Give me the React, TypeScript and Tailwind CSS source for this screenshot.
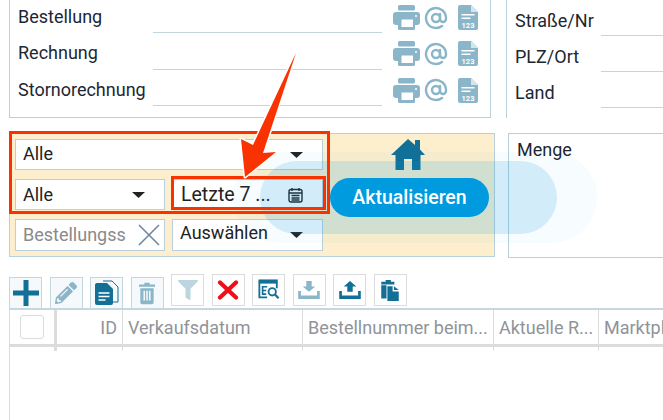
import { FaFilter, FaPencilAlt } from "react-icons/fa"
import { LuAtSign } from "react-icons/lu"

const docRows = ["Bestellung", "Rechnung", "Stornorechnung"]
const addressRows = ["Straße/Nr", "PLZ/Ort", "Land"]

const columns = [
  { label: "", width: "w-[47px]", border: "border-r-[3px]" },
  { label: "ID", width: "w-[66px]", border: "border-r", align: "text-right" },
  { label: "Verkaufsdatum", width: "w-[180px]", border: "border-r" },
  { label: "Bestellnummer beim...", width: "w-[191px]", border: "border-r" },
  { label: "Aktuelle R...", width: "w-[105px]", border: "border-r" },
  { label: "Marktplatz", width: "w-[65px]", border: "" },
]

function PrintIcon() {
  return (
    <svg width="27" height="25" viewBox="0 0 27 25" fill="#8bb6c9">
      <rect x="5" y="0" width="17" height="5.500" rx="1.500" />
      <rect x="0" y="7" width="27" height="13" rx="3" />
      <rect x="5" y="13" width="17" height="12" rx="1.500" />
      <rect x="8.500" y="14.500" width="11.500" height="7.500" fill="#fff" />
      <circle cx="23" cy="11" r="1" fill="#fff" />
    </svg>
  )
}

function DocIcon() {
  return (
    <svg width="20" height="25" viewBox="0 0 20 25">
      <path d="M2 0h11l7 7v16a2 2 0 0 1-2 2H2a2 2 0 0 1-2-2V2a2 2 0 0 1 2-2z" fill="#8bb6c9" />
      <path d="M13 0l7 7h-7z" fill="#d5e5ec" />
      <rect x="3.500" y="9" width="13" height="1.500" fill="#fff" />
      <rect x="3.500" y="12.500" width="9" height="1.500" fill="#fff" />
      <text x="10" y="22.500" textAnchor="middle" fontSize="7.500" fontWeight="700" fill="#fff" fontFamily="Roboto, sans-serif">
        123
      </text>
    </svg>
  )
}

function Caret() {
  return (
    <svg width="13" height="6" viewBox="0 0 13 6" fill="#222">
      <path d="M0 0h13L6.500 6z" />
    </svg>
  )
}

function SelectBox({ label, width, lift }: { label: string; width: string; lift: string }) {
  return (
    <div className={`${width} h-full flex items-center justify-between bg-white border border-[#b8d0dc] pl-[7px] pr-[19px] text-[#222]`}>
      <span className={lift}>{label}</span>
      <Caret />
    </div>
  )
}

function ToolButton({ children, low }: { children: React.ReactNode; low?: boolean }) {
  return (
    <div
      className={`w-[33px] h-[32px] flex items-center justify-center border ${low ? "mt-[3px] border-[#c3d7e0] bg-[#f5f9fb]" : "border-[#dcdcdc] bg-white"}`}
    >
      {children}
    </div>
  )
}

export default function App() {
  return (
    <div className="w-[663px] h-[420px] relative overflow-hidden bg-white text-[#1c2733] text-[18px] font-['Roboto',sans-serif]">
      {/* Top cards */}
      <div className="flex h-[118px] pl-[9px] gap-[15px]">
        <div className="w-[482px] border-x border-b border-[#bcd0da] pl-[8px] -mt-[3px] h-[121px]">
          {docRows.map((row) => (
            <div key={row} className="flex items-end h-[36.3px]">
              <span className="w-[135px] self-center pt-[3px]">{row}</span>
              <div className="w-[229px] border-b border-[#c3d5de]" />
              <div className="flex items-center ml-[11px] self-center pt-[5px] text-[#8bb6c9]">
                <PrintIcon />
                <LuAtSign className="w-[24px] h-[24px] ml-[4px]" strokeWidth={2.4} />
                <div className="ml-[10px]">
                  <DocIcon />
                </div>
              </div>
            </div>
          ))}
        </div>
        <div className="flex-1 border-l border-[#bcd0da] pl-[8px] -mt-[1px] h-[119px]">
          <div className="ml-[86px] border-b border-[#c3d5de] h-px" />
          {addressRows.map((row) => (
            <div key={row} className="flex h-[36px]">
              <span className="w-[86px] self-center pt-[4px]">{row}</span>
              <div className="flex-1 border-b border-[#c3d5de]" />
            </div>
          ))}
        </div>
      </div>

      {/* Filter panel and Menge */}
      <div className="flex mt-[15px] ml-[9px] gap-[13px]">
        <div className="w-[486px] h-[124px] flex bg-[#fdeecd] border border-[#b8d0dc] pl-[5px] pt-[5px]">
          <div className="w-[308px] flex flex-col gap-[9px]">
            <div className="h-[31px]">
              <SelectBox label="Alle" width="w-full" lift="pb-[3px]" />
            </div>
            <div className="h-[31px] flex gap-[7px]">
              <SelectBox label="Alle" width="w-[150px]" lift="pb-[1px]" />
              <div className="w-[151px] h-full flex items-center justify-between bg-white border border-[#b8d0dc] pl-2 pr-[19px] text-[19.500px] text-[#222]">
                <span>Letzte 7 ...</span>
                <svg width="15" height="16" viewBox="0 0 15 16" fill="none" stroke="#222" strokeWidth="1.400">
                  <rect x="1" y="2.500" width="13" height="12.500" rx="2" />
                  <path d="M1 6h13M4 1v3M11 1v3M3.500 8.500h8M3.500 11h8M3.500 13h8" />
                </svg>
              </div>
            </div>
            <div className="h-[32px] flex gap-[7px]">
              <div className="w-[150px] h-full flex items-center justify-between bg-white border border-[#b8d0dc] pl-[7px] pr-[3px] text-[#8a8a8a]">
                <span className="pb-[1px]">Bestellungss</span>
                <svg width="24" height="24" viewBox="0 0 24 24" stroke="#6f86a3" strokeWidth="1.600">
                  <path d="M2 2l20 20M22 2L2 22" />
                </svg>
              </div>
              <SelectBox label="Auswählen" width="w-[151px]" lift="pb-[5px]" />
            </div>
          </div>
          <div className="ml-[7px] w-[159px] flex flex-col items-center">
            <svg className="-ml-[3px]" width="34" height="31" viewBox="0 0 34 31" fill="#126f96">
              <path d="M17 0l7 6V1h5v9.500l5 5.500h-4.500v15H21V20h-8v11H4.500V16H0z" />
            </svg>
            <div className="relative z-10 mt-[8px] w-full h-[39px] rounded-full bg-[#009ade] text-white font-medium text-[19.500px] flex items-center justify-center">
              Aktualisieren
            </div>
          </div>
        </div>
        <div className="flex-1 h-[125px] border border-[#b8d0dc] border-r-0 pl-[8px] pt-[2px] bg-white">Menge</div>
      </div>

      {/* Toolbar */}
      <div className="flex items-start gap-[7.500px] ml-[9px] mt-[16px] h-[34px]">
        <ToolButton low>
          <svg width="26" height="26" viewBox="0 0 26 26" fill="#126f96">
            <path d="M10.500 0h5v10.500H26v5H15.500V26h-5V15.500H0v-5h10.500z" />
          </svg>
        </ToolButton>
        <ToolButton low>
          <FaPencilAlt className="w-[22px] h-[22px] text-[#8bb6c9]" />
        </ToolButton>
        <ToolButton low>
          <svg width="24" height="26" viewBox="0 0 24 26">
            <path d="M8 1h9l6 6v15h-5" fill="#f5f9fb" stroke="#126f96" strokeWidth="1" />
            <path d="M2 3h10l6 6v14a2 2 0 0 1-2 2H2a2 2 0 0 1-2-2V5a2 2 0 0 1 2-2z" fill="#126f96" />
            <path d="M3.500 13h11M3.500 16.500h11M3.500 20h7" stroke="#fff" strokeWidth="1.400" />
          </svg>
        </ToolButton>
        <ToolButton low>
          <svg width="16" height="23" viewBox="0 0 18 24" fill="#8bb6c9">
            <path d="M6 0h6v2h6v2.500H0V2h6z" />
            <path fillRule="evenodd" d="M1.500 6h15v16a2 2 0 0 1-2 2h-11a2 2 0 0 1-2-2zM5 9v11h1.800V9zM8.100 9v11h1.800V9zM11.200 9v11H13V9z" />
          </svg>
        </ToolButton>
        <ToolButton>
          <FaFilter className="w-[20px] h-[22px] text-[#bcd6e0]" />
        </ToolButton>
        <ToolButton>
          <svg width="22" height="20" viewBox="0 0 22 20" stroke="#ee0f18" strokeWidth="4.200" strokeLinecap="round">
            <path d="M3 2.500l16 15M19 2.500l-16 15" />
          </svg>
        </ToolButton>
        <ToolButton>
          <svg width="22" height="22" viewBox="0 0 24 24" fill="none">
            <path d="M10 20H1.500V1.500h19V10" stroke="#126f96" strokeWidth="2" />
            <rect x="1" y="1" width="20" height="4" fill="#126f96" />
            <path d="M10 8.500H5v8h4M5 12.500h4" stroke="#126f96" strokeWidth="1.800" />
            <circle cx="15.500" cy="14" r="4" stroke="#126f96" strokeWidth="2" />
            <path d="M18.500 17l4 4" stroke="#126f96" strokeWidth="2.400" />
          </svg>
        </ToolButton>
        <ToolButton>
          <svg width="22" height="18" viewBox="0 0 24 20" fill="#8bb6c9">
            <path d="M9 0h6v6h4l-7 6-7-6h4z" />
            <path d="M0 11h3v5h18v-5h3v9H0z" />
          </svg>
        </ToolButton>
        <ToolButton>
          <svg width="22" height="18" viewBox="0 0 24 20" fill="#126f96">
            <path d="M9 12h6V6h4L12 0 5 6h4z" />
            <path d="M0 11h3v5h18v-5h3v9H0z" />
          </svg>
        </ToolButton>
        <ToolButton>
          <svg width="18" height="21" viewBox="0 0 20 24" fill="#126f96">
            <path d="M5 0h6v2h4v3H0V2h5zM0 6h6v15H0z" />
            <path d="M7 7h6v6h7v11H7zM14.500 7l5.500 4.500h-5.500z" />
          </svg>
        </ToolButton>
      </div>

      {/* Table */}
      <div className="ml-[9px] border-l border-t-2 border-[#c8d6dd] border-l-[#dcdcdc] h-[120px]">
        <div className="flex h-[37px] border-b-[3px] border-[#dcdcdc] text-[#8f9499]">
          {columns.map((col, i) => (
            <div key={i} className={`${col.width} ${col.border} ${col.align ?? ""} shrink-0 border-[#dcdcdc] px-[5px] flex items-center overflow-hidden whitespace-nowrap`}>
              {i === 0 ? (
                <div className="ml-[5px] w-[24px] h-[24px] rounded-[3px] border border-[#dcdcdc]" />
              ) : (
                <span className={col.align ? "w-full" : ""}>{col.label}</span>
              )}
            </div>
          ))}
        </div>
        <div className="flex h-[4px]">
          {columns.map((col, i) => (
            <div key={i} className={`${col.width} ${col.border} shrink-0 border-[#dcdcdc]`} />
          ))}
        </div>
      </div>

      {/* Highlight pills */}
      <div className="absolute left-[233px] top-[152px] w-[364px] h-[91px] rounded-full bg-[#009ade]/[0.03]" />
      <div className="absolute left-[260px] top-[161px] w-[297px] h-[73px] rounded-full bg-[#009ade]/[0.15]" />

      {/* Red marks */}
      <div className="absolute left-[9px] top-[131px] w-[321px] h-[83px] border-[3px] border-[#f83200]" />
      <div className="absolute left-[171px] top-[176px] w-[155px] h-[34px] border-[3px] border-[#f83200]" />
      <svg className="absolute left-0 top-0" width="663" height="420" viewBox="0 0 663 420">
        <polygon
          points="296,53 253,145 241,139 245,177 276,152 263,153"
          fill="#f83200"
          stroke="#fff"
          strokeWidth="3"
          strokeLinejoin="round"
          paintOrder="stroke"
        />
      </svg>
    </div>
  )
}
